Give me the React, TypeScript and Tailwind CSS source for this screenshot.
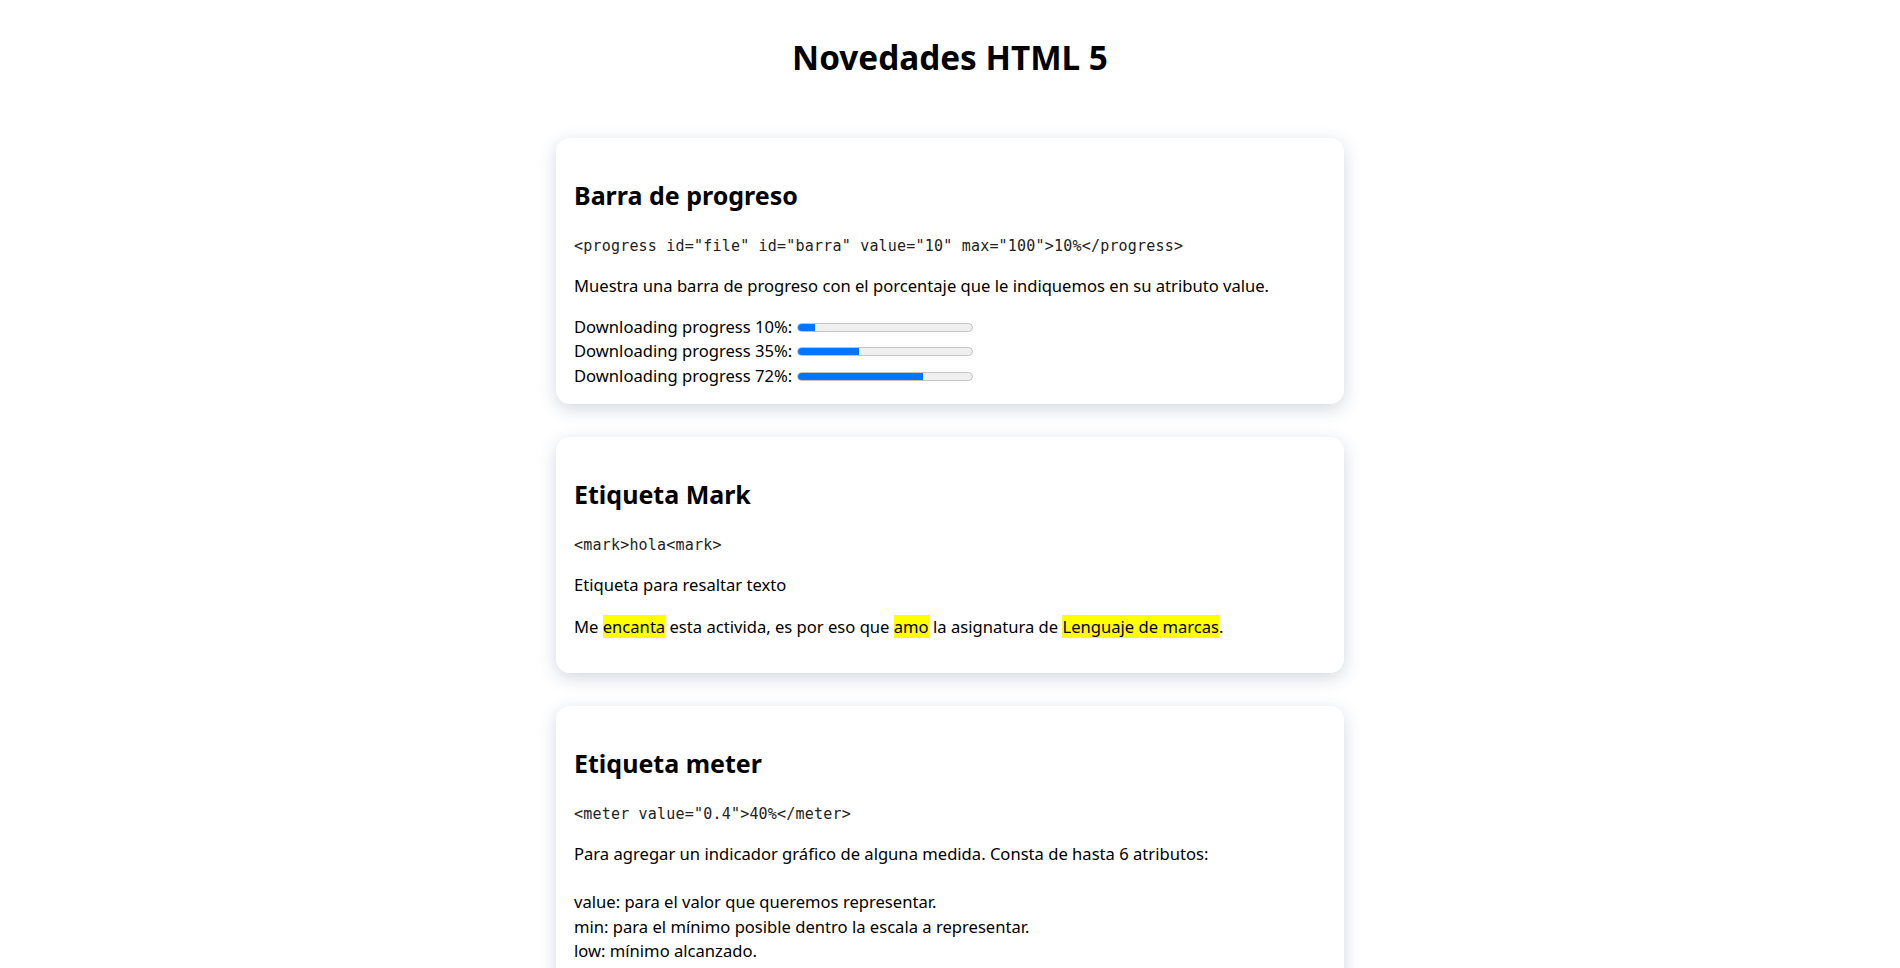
const body = "font-['Noto_Sans',sans-serif]";
const mono = "font-['DejaVu_Sans_Mono',monospace] text-[15px] tracking-[0.2px] leading-[normal]";

const Card = ({ title, code, children }: { title: string; code: string; children: React.ReactNode }) => (
  <section className="w-[788px] mx-auto bg-white rounded-[14px] shadow-[0_5px_18px_rgba(30,60,100,0.2)] px-[18px] pt-[39.5px] pb-[15.5px]">
    <h2 className="text-[25px] font-bold leading-[normal] text-black">{title}</h2>
    <p className={`${mono} mt-[25.5px] text-[#222]`}>{code}</p>
    {children}
  </section>
);

const Progress = ({ value }: { value: number }) => (
  <div className="leading-[24.4px]">
    Downloading progress {value}%:{" "}
    <span className="inline-block align-baseline mb-[1px] w-[176px] h-[9px] rounded-full bg-[#efefef] border border-[#c4c4c4] overflow-hidden">
      <span className="block h-full bg-[#0075ff]" style={{ width: `${value}%` }} />
    </span>
  </div>
);

const Mark = ({ children }: { children: React.ReactNode }) => (
  <mark className="bg-[#ffff00] text-black">{children}</mark>
);

export default function App() {
  return (
    <div className={`${body} min-h-screen bg-white text-black text-[16.6px] pb-10`}>
      <h1 className="pt-[34px] text-center text-[33.3px] font-bold leading-[normal]">Novedades HTML 5</h1>

      <div className="mt-[58px] flex flex-col gap-[33.5px]">
        <Card title="Barra de progreso" code={'<progress id="file" id="barra" value="10" max="100">10%</progress>'}>
          <p className="mt-[18.5px] leading-[24.4px]">
            Muestra una barra de progreso con el porcentaje que le indiquemos en su atributo value.
          </p>
          <div className="mt-[17px]">
            <Progress value={10} />
            <Progress value={35} />
            <Progress value={72} />
          </div>
        </Card>

        <Card title="Etiqueta Mark" code="<mark>hola<mark>">
          <p className="mt-[18.5px] leading-[24.4px]">Etiqueta para resaltar texto</p>
          <p className="mt-[18px] mb-[18px] leading-[24.4px]">
            Me <Mark>encanta</Mark> esta activida, es por eso que <Mark>amo</Mark> la asignatura de{" "}
            <Mark>Lenguaje de marcas</Mark>.
          </p>
        </Card>

        <Card title="Etiqueta meter" code={'<meter value="0.4">40%</meter>'}>
          <p className="mt-[18.5px] mb-[18px] leading-[24.2px]">
            Para agregar un indicador gráfico de alguna medida. Consta de hasta 6 atributos:
            <br />
            <br />
            value: para el valor que queremos representar.
            <br />
            min: para el mínimo posible dentro la escala a representar.
            <br />
            low: mínimo alcanzado.
            <br />
            max: para el máximo posible.
            <br />
            high: máximo alcanzado.
            <br />
            optimum: valor óptimo.
          </p>
        </Card>
      </div>
    </div>
  );
}
